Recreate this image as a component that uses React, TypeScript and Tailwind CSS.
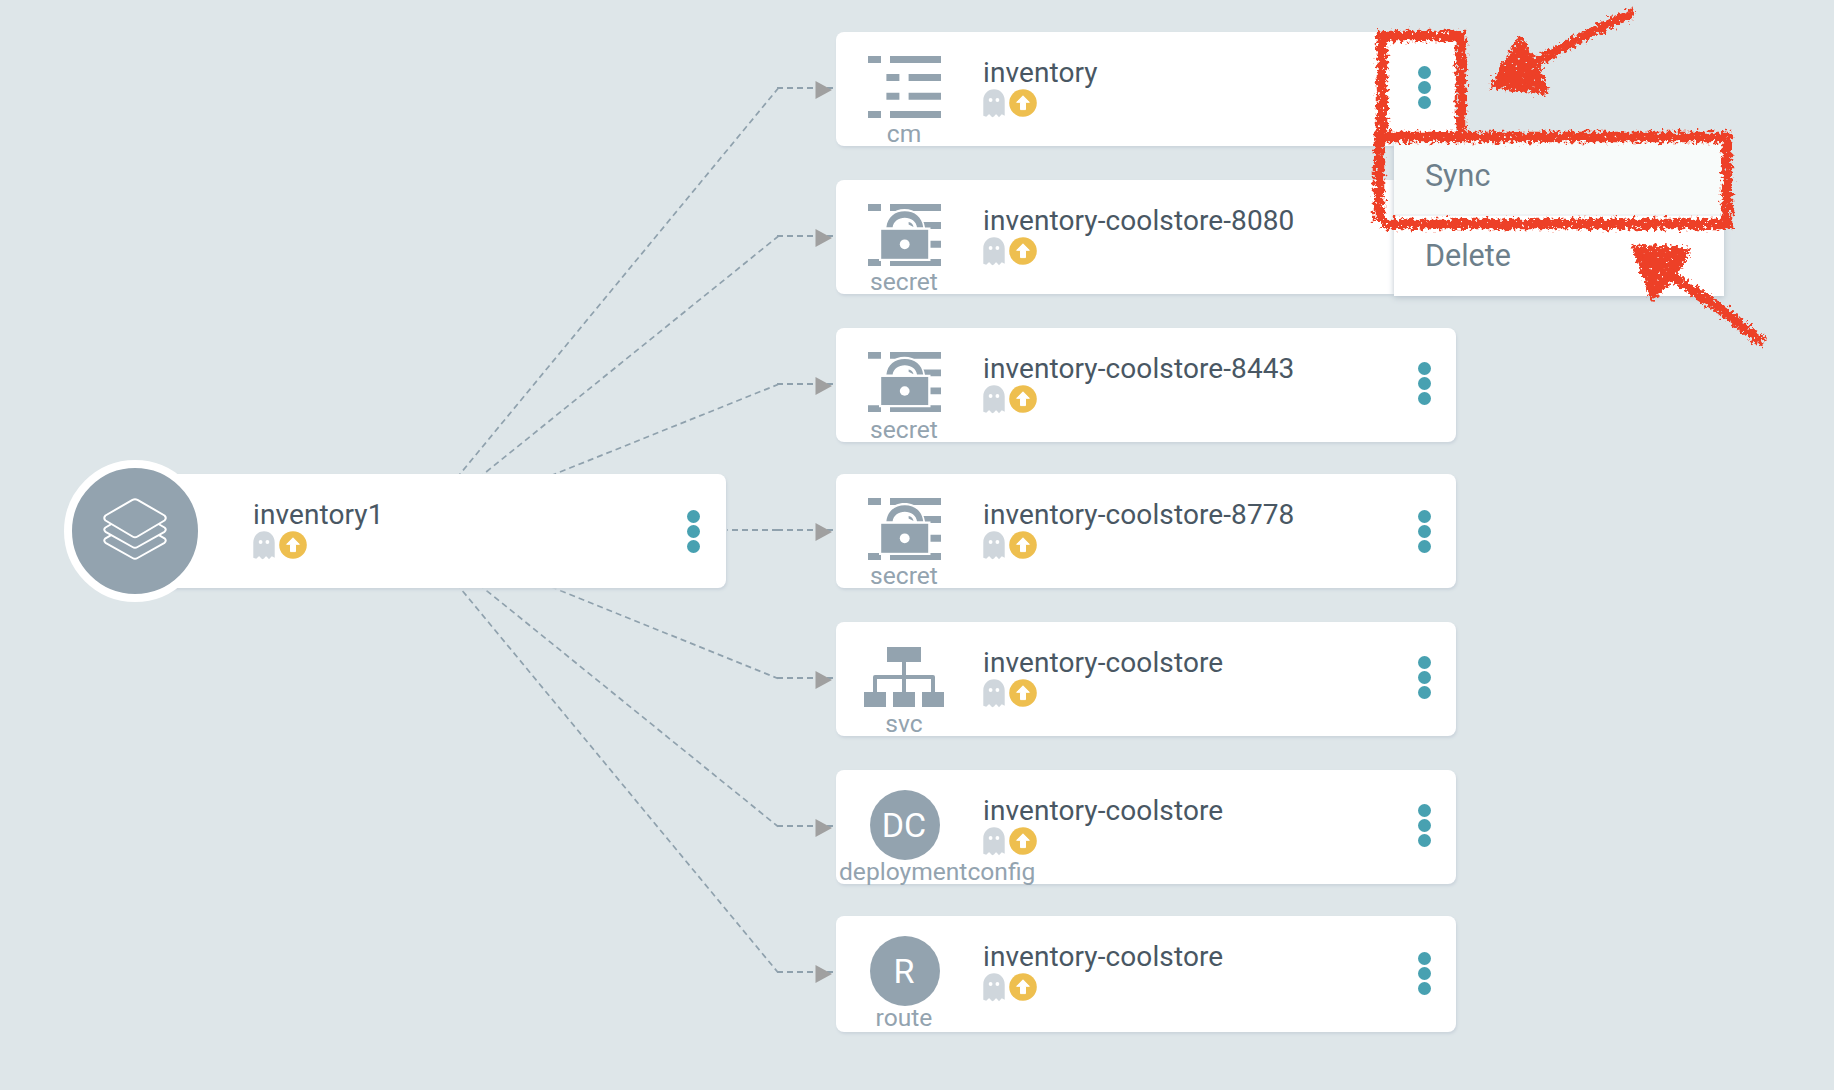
import React from "react";

const SLATE = "#93a3af";

function Dots() {
  return (
    <div className="flex flex-col gap-[2.2px]">
      <span className="size-[13px] rounded-full bg-[#48a1b1]" />
      <span className="size-[13px] rounded-full bg-[#48a1b1]" />
      <span className="size-[13px] rounded-full bg-[#48a1b1]" />
    </div>
  );
}

function Status() {
  return (
    <div className="flex gap-1">
      <svg width="22" height="29" viewBox="0 0 22 29">
        <path
          fill="#cfd6dc"
          d="M0.3 26.8V11.5C0.3 5 5 0.3 11 0.3S21.7 5 21.7 11.5V26.8L18.8 25.2 16 28.3 13.6 25.4H12.6L11 27.4 9.2 28.3 6.3 25.3H5.9L3.2 27.8Z"
        />
        <circle cx="7.6" cy="11" r="1.9" fill="#fff" />
        <circle cx="14.4" cy="11" r="1.9" fill="#fff" />
      </svg>
      <svg width="28" height="28" viewBox="0 0 28 28">
        <circle cx="14" cy="14" r="13.8" fill="#eebf4f" />
        <path fill="#fff" stroke="#fff" strokeWidth="1" strokeLinejoin="round" d="M14 6.8L20.4 13.3H16.5V20.6H11.5V13.3H7.6Z" />
      </svg>
    </div>
  );
}

function Title({ name }: { name: string }) {
  return (
    <div className="flex flex-1 flex-col pt-6">
      <h2 className="text-[28px] leading-[33px] tracking-[0.1px] text-[#495763]">{name}</h2>
      <Status />
    </div>
  );
}

function KindIcon({ kind, short }: { kind: string; short?: boolean }) {
  if (kind === "cm" || kind === "secret") {
    return (
      <svg
        viewBox="0 0 73 62"
        preserveAspectRatio="none"
        className={short ? "mb-[2px] h-[60px] w-[73px]" : "h-[62px] w-[73px]"}
      >
        <path
          fill={SLATE}
          d="M0 0H13V7H0ZM22 0H73V7H22ZM18.4 18H31.4V25H18.4ZM40.6 18H73V25H40.6ZM18.4 36.7H31.4V43.7H18.4ZM40.6 36.7H73V43.7H40.6ZM0 55H13V62H0ZM22 55H73V62H22Z"
        />
        {kind === "secret" && (
          <>
            <path fill="#fff" d="M11 23.500H17C17.500 12 26 5 36.500 5S55.500 12 57 23.500H62.500V57H11Z" />
            <path fill={SLATE} d="M18.400 23.300C19.500 13 27 7.300 36.800 7.300S54 13 55.200 23.300H49C48.300 17.500 43 13.800 36.800 13.800S25.400 17.500 24.600 23.300Z" />
            <path fill={SLATE} d="M40.600 18C43 18.500 45 20 45.500 23L40.600 20.500Z" />
            <rect x="13.200" y="25.800" width="47" height="29" fill={SLATE} />
            <circle cx="36.700" cy="40.300" r="4.900" fill="#fff" />
          </>
        )}
      </svg>
    );
  }
  if (kind === "svc") {
    return (
      <svg width="80" height="60" viewBox="0 0 80 60">
        <path fill={SLATE} d="M23 0H57V15H23ZM0 45H22V60H0ZM29 45H51V60H29ZM58 45H80V60H58Z" />
        <path fill="none" stroke={SLATE} strokeWidth="4" strokeLinejoin="round" d="M40 14V46M11 46V30H69V46" />
      </svg>
    );
  }
  return (
    <div className="ml-[2px] flex size-[70px] shrink-0 items-center justify-center rounded-full bg-[#93a3af] pr-[2px] text-[34px] leading-none text-white">
      {kind === "route" ? "R" : "DC"}
    </div>
  );
}

const nodes = [
  { y: 32, kind: "cm", name: "inventory", box: "h-[114px]" },
  { y: 180, kind: "secret", name: "inventory-coolstore-8080", box: "mt-[34px] h-[114px]" },
  { y: 328, kind: "secret", name: "inventory-coolstore-8443", box: "mt-[34px] h-[114px]", short: true },
  { y: 474, kind: "secret", name: "inventory-coolstore-8778", box: "mt-[32px] h-[114px]", low: true },
  { y: 622, kind: "svc", name: "inventory-coolstore", box: "mt-[34px] h-[114px]" },
  { y: 770, kind: "deploymentconfig", name: "inventory-coolstore", box: "mt-[34px] h-[114px]" },
  { y: 916, kind: "route", name: "inventory-coolstore", box: "mt-[32px] h-[116px]", low: true },
];

function Edges() {
  return (
    <svg width="1834" height="1090" className="absolute left-0 top-0">
      {nodes.map((n) => (
        <g key={n.y}>
          {n.y !== 474 && (
            <path
              d={`M778 ${n.y + 56.5}L413 531`}
              fill="none"
              stroke="#8fa1ad"
              strokeWidth="1.7"
              strokeDasharray="6 4"
              strokeDashoffset="1"
            />
          )}
          {n.y === 474 && <path d="M727 530H778" stroke="#8fa1ad" strokeWidth="2" strokeDasharray="6 4" strokeDashoffset="5" />}
          <path d={`M777 ${n.y + 56}H820`} stroke="#8fa1ad" strokeWidth="2" strokeDasharray="6 4" />
          <path d={`M827 ${n.y + 56}H833`} stroke="#8fa1ad" strokeWidth="2" />
          <path d={`M815.500 ${n.y + 49}V${n.y + 67}L832 ${n.y + 58}Z`} fill="#a0a0a0" />
        </g>
      ))}
    </svg>
  );
}

function Annotations() {
  return (
    <svg width="1834" height="1090" className="pointer-events-none absolute left-0 top-0">
      <defs>
        <filter id="chalk" x="1340" y="0" width="460" height="380" filterUnits="userSpaceOnUse" colorInterpolationFilters="sRGB">
          <feTurbulence type="fractalNoise" baseFrequency="0.28" numOctaves="3" seed="4" result="n" />
          <feDisplacementMap in="SourceGraphic" in2="n" scale="12" xChannelSelector="R" yChannelSelector="G" result="d" />
          <feColorMatrix in="n" type="matrix" values="0 0 0 0 0  0 0 0 0 0  0 0 0 0 0  0 0 0 12 -2.4" result="m" />
          <feComposite in="d" in2="m" operator="in" />
        </filter>
      </defs>
      <g filter="url(#chalk)" fill="none" stroke="#ed4027" strokeWidth="10.500">
        <path d="M1382 135V36H1461V135" />
        <path d="M1379 222V137H1727V224H1382" />
        <path d="M1634 12L1590 33 1536 62" strokeWidth="10" />
        <path d="M1520 41L1494 85 1545 91 1535 65Z" fill="#ed4027" strokeWidth="7" strokeLinejoin="round" />
        <path d="M1763 343L1722 310 1672 276" strokeWidth="10" />
        <path d="M1636 248L1687 251 1670 279 1653 296Z" fill="#ed4027" strokeWidth="7" strokeLinejoin="round" />
      </g>
    </svg>
  );
}

export default function App() {
  return (
    <main className="relative flex h-[1090px] w-[1834px] overflow-hidden bg-[#dee6e9] pl-16 font-['Roboto',sans-serif]">
      <Edges />
      <section className="relative mt-[460px] flex h-[142px] w-[662px] items-center">
        <div className="z-10 flex size-[142px] shrink-0 items-center justify-center rounded-full border-8 border-white bg-[#93a3af] pb-[5px]">
          <svg width="64" height="62" viewBox="0 0 64 62" fill="none" stroke="#fff" strokeWidth="2" strokeLinejoin="round">
            <path d="M29.500 1.800Q32 0.500 34.500 1.800L61.500 17.500Q64 20 61.500 22.500L34.500 38.500Q32 40 29.500 38.500L2.500 22.500Q0 20 2.500 17.500Z" />
            <path d="M8.500 26L2.500 29.500Q0 31.500 2.500 33.800L29.500 49Q32 50.500 34.500 49L61.500 33.800Q64 31.500 61.500 29.500L55.500 26" />
            <path d="M8.500 36.800L2.500 40.300Q0 42.500 2.500 44.800L29.500 60Q32 61.500 34.500 60L61.500 44.800Q64 42.500 61.500 40.300L55.500 36.800" />
          </svg>
        </div>
        <div className="-ml-[72px] flex h-[114px] flex-1 rounded-[8px] bg-white pl-[119px] pr-[26px] shadow-[1px_2px_3px_#cbd4dc]">
          <Title name="inventory1" />
          <div className="pt-9">
            <Dots />
          </div>
        </div>
      </section>

      <div className="relative ml-[110px] flex w-[620px] flex-col pt-8">
        {nodes.map((n) => (
          <section
            key={n.y}
            className={`flex shrink-0 rounded-[8px] bg-white pr-[25.5px] shadow-[1px_2px_3px_#cbd4dc] ${n.box}`}
          >
            <div className="flex w-[147px] shrink-0 flex-col pl-[3px]">
              <div className="flex h-[88px] w-[130px] shrink-0 items-center justify-center pt-[22px]">
                <KindIcon kind={n.kind} short={n.short} />
              </div>
              <p className="w-fit min-w-[130px] whitespace-nowrap text-center text-[24.600px] leading-[28px] text-[#93a3af]">
                {n.kind}
              </p>
            </div>
            <Title name={n.name} />
            <div className={n.low ? "pt-[35.5px]" : "pt-[33.5px]"}>
              <Dots />
            </div>
          </section>
        ))}
      </div>

      <div className="absolute left-[1394px] top-[136px] flex h-[160px] w-[330px] flex-col bg-white text-[30.500px] leading-[36px] text-[#6d7f8b] shadow-[0_2px_6px_#bac5cd]">
        <button className="h-[80px] border-b-2 border-[#eff3f5] bg-[#f8fbfa] px-[31px] pt-[2px] text-left">Sync</button>
        <button className="h-[80px] px-[31px] text-left">Delete</button>
      </div>
      <Annotations />
    </main>
  );
}
